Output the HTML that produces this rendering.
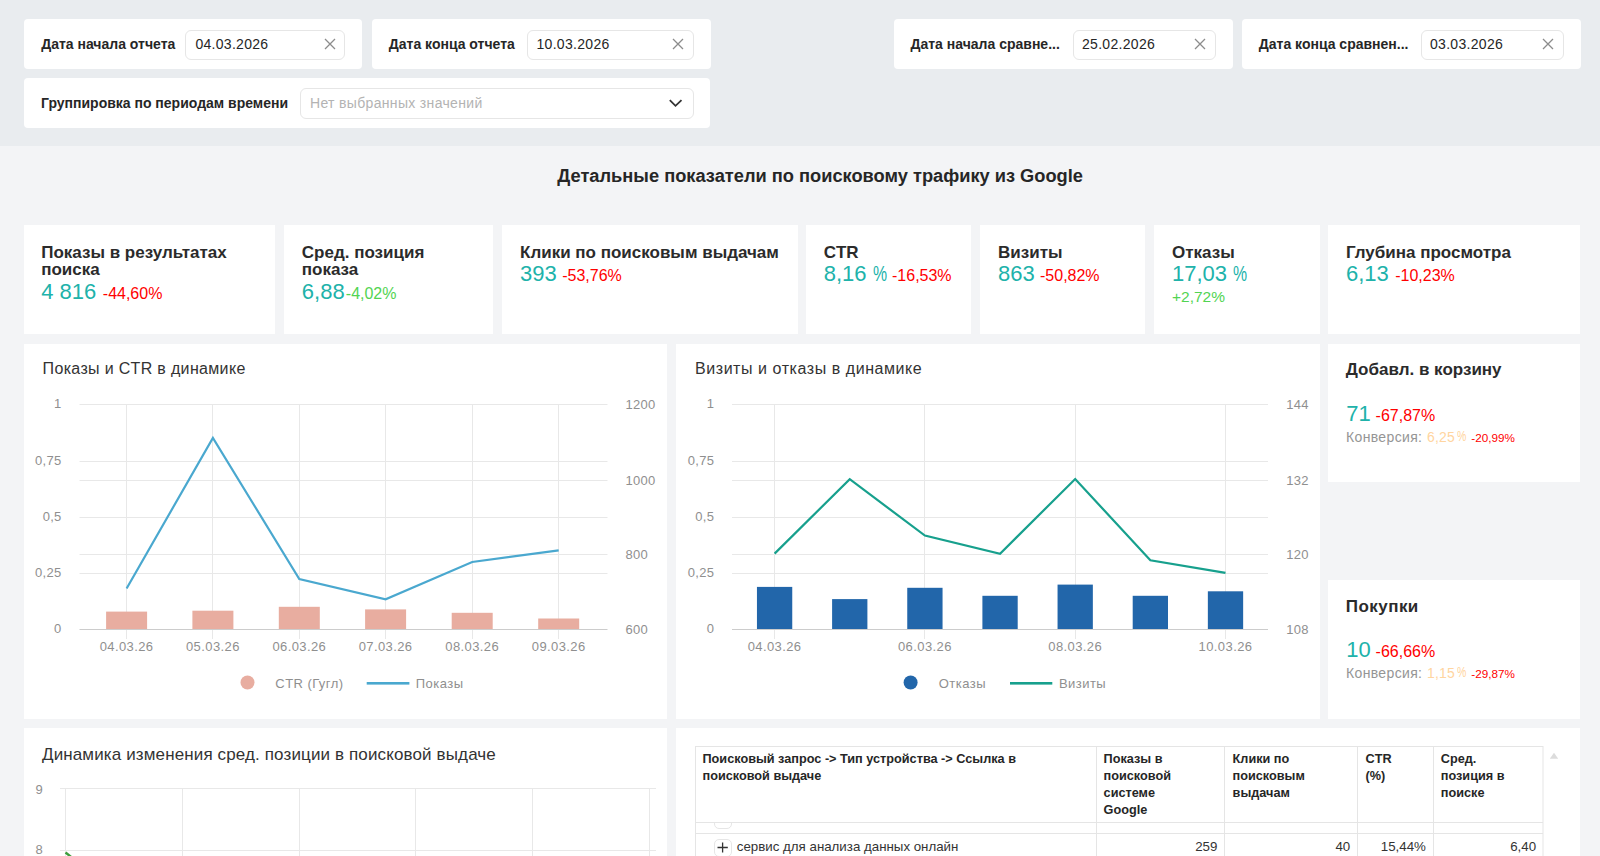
<!DOCTYPE html>
<html><head><meta charset="utf-8"><style>
html,body{margin:0;padding:0;}
body{width:1600px;height:856px;overflow:hidden;position:relative;background:#f3f4f6;font-family:"Liberation Sans", sans-serif;}
.t{position:absolute;white-space:nowrap;}
.b{position:absolute;}
</style></head><body>
<div class="b" style="left:0px;top:0px;width:1600px;height:146px;background:#e9ecef;"></div>
<div class="b" style="left:24px;top:19px;width:338px;height:50px;background:#fff;border-radius:4px;"></div>
<div class="t" style="left:41.20px;top:37.25px;font-size:14px;line-height:14px;color:#262626;font-weight:bold;">Дата начала отчета</div>
<div class="b" style="left:185.3px;top:29.5px;width:160.2px;height:30px;box-sizing:border-box;border:1px solid #e6e6e6;border-radius:6px;"></div>
<div class="t" style="left:195.40px;top:37.15px;font-size:14px;line-height:14px;color:#262626;letter-spacing:0.3px;">04.03.2026</div>
<svg class="b" style="left:324.0px;top:38.0px" width="12" height="12"><path d="M1 1L11 11M11 1L1 11" stroke="#8c8c8c" stroke-width="1.3" fill="none"/></svg>
<div class="b" style="left:372px;top:19px;width:338.5px;height:50px;background:#fff;border-radius:4px;"></div>
<div class="t" style="left:388.80px;top:37.25px;font-size:14px;line-height:14px;color:#262626;font-weight:bold;">Дата конца отчета</div>
<div class="b" style="left:526.5px;top:29.5px;width:167.0px;height:30px;box-sizing:border-box;border:1px solid #e6e6e6;border-radius:6px;"></div>
<div class="t" style="left:536.50px;top:37.15px;font-size:14px;line-height:14px;color:#262626;letter-spacing:0.3px;">10.03.2026</div>
<svg class="b" style="left:672.0px;top:38.0px" width="12" height="12"><path d="M1 1L11 11M11 1L1 11" stroke="#8c8c8c" stroke-width="1.3" fill="none"/></svg>
<div class="b" style="left:894px;top:19px;width:338.5px;height:50px;background:#fff;border-radius:4px;"></div>
<div class="t" style="left:910.50px;top:37.25px;font-size:14px;line-height:14px;color:#262626;font-weight:bold;">Дата начала сравне...</div>
<div class="b" style="left:1073px;top:29.5px;width:142.5px;height:30px;box-sizing:border-box;border:1px solid #e6e6e6;border-radius:6px;"></div>
<div class="t" style="left:1082.00px;top:37.15px;font-size:14px;line-height:14px;color:#262626;letter-spacing:0.3px;">25.02.2026</div>
<svg class="b" style="left:1194.0px;top:38.0px" width="12" height="12"><path d="M1 1L11 11M11 1L1 11" stroke="#8c8c8c" stroke-width="1.3" fill="none"/></svg>
<div class="b" style="left:1242px;top:19px;width:338.5px;height:50px;background:#fff;border-radius:4px;"></div>
<div class="t" style="left:1258.80px;top:37.25px;font-size:14px;line-height:14px;color:#262626;font-weight:bold;">Дата конца сравнен...</div>
<div class="b" style="left:1421px;top:29.5px;width:142.70000000000005px;height:30px;box-sizing:border-box;border:1px solid #e6e6e6;border-radius:6px;"></div>
<div class="t" style="left:1430.00px;top:37.15px;font-size:14px;line-height:14px;color:#262626;letter-spacing:0.3px;">03.03.2026</div>
<svg class="b" style="left:1542.0px;top:38.0px" width="12" height="12"><path d="M1 1L11 11M11 1L1 11" stroke="#8c8c8c" stroke-width="1.3" fill="none"/></svg>
<div class="b" style="left:24px;top:78px;width:686px;height:50px;background:#fff;border-radius:4px;"></div>
<div class="t" style="left:41.00px;top:96.25px;font-size:14px;line-height:14px;color:#262626;font-weight:bold;">Группировка по периодам времени</div>
<div class="b" style="left:299.5px;top:87.5px;width:394px;height:31px;box-sizing:border-box;border:1px solid #e6e6e6;border-radius:6px;"></div>
<div class="t" style="left:310.00px;top:96.15px;font-size:14px;line-height:14px;color:#b3b3b3;letter-spacing:0.33px;">Нет выбранных значений</div>
<svg class="b" style="left:668px;top:98px" width="16" height="10"><path d="M1.8 2.1L7.5 7.8L13.5 2.1" stroke="#333" stroke-width="1.8" fill="none"/></svg>
<div class="t" style="left:557.30px;top:166.85px;font-size:18.25px;line-height:18.25px;color:#262626;font-weight:bold;">Детальные показатели по поисковому трафику из Google</div>
<div class="b" style="left:24px;top:225px;width:251px;height:109px;background:#fff;"></div>
<div class="t" style="left:41.20px;top:243.51px;font-size:17px;line-height:17px;color:#2b2b2b;font-weight:bold;">Показы в результатах</div>
<div class="t" style="left:41.20px;top:261.01px;font-size:17px;line-height:17px;color:#2b2b2b;font-weight:bold;">поиска</div>
<div class="t" style="left:41.20px;top:280.98px;font-size:22px;line-height:22px;color:#20b2aa;">4 816</div>
<div class="t" style="left:102.80px;top:286.06px;font-size:16px;line-height:16px;color:#ff0000;">-44,60%</div>
<div class="b" style="left:284px;top:225px;width:208.5px;height:109px;background:#fff;"></div>
<div class="t" style="left:301.80px;top:243.51px;font-size:17px;line-height:17px;color:#2b2b2b;font-weight:bold;">Сред. позиция</div>
<div class="t" style="left:301.80px;top:261.01px;font-size:17px;line-height:17px;color:#2b2b2b;font-weight:bold;">показа</div>
<div class="t" style="left:301.80px;top:280.98px;font-size:22px;line-height:22px;color:#20b2aa;">6,88</div>
<div class="t" style="left:345.80px;top:286.06px;font-size:16px;line-height:16px;color:#52d452;">-4,02%</div>
<div class="b" style="left:502px;top:225px;width:296px;height:109px;background:#fff;"></div>
<div class="t" style="left:520.00px;top:243.51px;font-size:17px;line-height:17px;color:#2b2b2b;font-weight:bold;">Клики по поисковым выдачам</div>
<div class="t" style="left:520.00px;top:262.78px;font-size:22px;line-height:22px;color:#20b2aa;">393</div>
<div class="t" style="left:562.20px;top:267.86px;font-size:16px;line-height:16px;color:#ff0000;">-53,76%</div>
<div class="b" style="left:806px;top:225px;width:165px;height:109px;background:#fff;"></div>
<div class="t" style="left:823.70px;top:243.51px;font-size:17px;line-height:17px;color:#2b2b2b;font-weight:bold;">CTR</div>
<div class="t" style="left:823.70px;top:262.78px;font-size:22px;line-height:22px;color:#20b2aa;">8,16</div>
<div class="t" style="left:872.5px;top:262.78px;font-size:22px;line-height:22px;color:#20b2aa;transform:scaleX(0.72);transform-origin:0 0">%</div>
<div class="t" style="left:892.00px;top:267.86px;font-size:16px;line-height:16px;color:#ff0000;">-16,53%</div>
<div class="b" style="left:980px;top:225px;width:165px;height:109px;background:#fff;"></div>
<div class="t" style="left:998.00px;top:243.51px;font-size:17px;line-height:17px;color:#2b2b2b;font-weight:bold;">Визиты</div>
<div class="t" style="left:998.00px;top:262.78px;font-size:22px;line-height:22px;color:#20b2aa;">863</div>
<div class="t" style="left:1040.00px;top:267.86px;font-size:16px;line-height:16px;color:#ff0000;">-50,82%</div>
<div class="b" style="left:1154px;top:225px;width:166px;height:109px;background:#fff;"></div>
<div class="t" style="left:1172.00px;top:243.51px;font-size:17px;line-height:17px;color:#2b2b2b;font-weight:bold;">Отказы</div>
<div class="t" style="left:1172.00px;top:262.78px;font-size:22px;line-height:22px;color:#20b2aa;">17,03</div>
<div class="t" style="left:1232.5px;top:262.78px;font-size:22px;line-height:22px;color:#20b2aa;transform:scaleX(0.72);transform-origin:0 0">%</div>
<div class="t" style="left:1172.00px;top:288.88px;font-size:15.5px;line-height:15.5px;color:#52d452;">+2,72%</div>
<div class="b" style="left:1328px;top:225px;width:252px;height:109px;background:#fff;"></div>
<div class="t" style="left:1346.00px;top:243.51px;font-size:17px;line-height:17px;color:#2b2b2b;font-weight:bold;">Глубина просмотра</div>
<div class="t" style="left:1346.00px;top:262.78px;font-size:22px;line-height:22px;color:#20b2aa;">6,13</div>
<div class="t" style="left:1395.20px;top:267.86px;font-size:16px;line-height:16px;color:#ff0000;">-10,23%</div>
<div class="b" style="left:24px;top:344px;width:643px;height:375px;background:#fff;"></div>
<div class="b" style="left:676px;top:344px;width:644px;height:375px;background:#fff;"></div>
<div class="b" style="left:1328px;top:344px;width:252px;height:138px;background:#fff;"></div>
<div class="b" style="left:1328px;top:580px;width:252px;height:139px;background:#fff;"></div>
<div class="b" style="left:24px;top:728px;width:643px;height:128px;background:#fff;"></div>
<div class="b" style="left:676px;top:728px;width:904px;height:128px;background:#fff;"></div>
<div class="t" style="left:42.60px;top:360.86px;font-size:16px;line-height:16px;color:#333;letter-spacing:0.33px;">Показы и CTR в динамике</div>
<div class="t" style="right:1538.40px;top:397.00px;font-size:13px;line-height:13px;color:#8f8f8f;letter-spacing:0.3px;">1</div>
<div class="t" style="right:1538.40px;top:454.00px;font-size:13px;line-height:13px;color:#8f8f8f;letter-spacing:0.3px;">0,75</div>
<div class="t" style="right:1538.40px;top:510.00px;font-size:13px;line-height:13px;color:#8f8f8f;letter-spacing:0.3px;">0,5</div>
<div class="t" style="right:1538.40px;top:566.00px;font-size:13px;line-height:13px;color:#8f8f8f;letter-spacing:0.3px;">0,25</div>
<div class="t" style="right:1538.40px;top:622.00px;font-size:13px;line-height:13px;color:#8f8f8f;letter-spacing:0.3px;">0</div>
<div class="t" style="left:625.50px;top:397.50px;font-size:13px;line-height:13px;color:#8f8f8f;letter-spacing:0.3px;">1200</div>
<div class="t" style="left:625.50px;top:473.50px;font-size:13px;line-height:13px;color:#8f8f8f;letter-spacing:0.3px;">1000</div>
<div class="t" style="left:625.50px;top:547.50px;font-size:13px;line-height:13px;color:#8f8f8f;letter-spacing:0.3px;">800</div>
<div class="t" style="left:625.50px;top:622.50px;font-size:13px;line-height:13px;color:#8f8f8f;letter-spacing:0.3px;">600</div>
<div class="t" style="left:126.60px;transform:translateX(-50%);top:639.60px;font-size:13px;line-height:13px;color:#8f8f8f;letter-spacing:0.4px;">04.03.26</div>
<div class="t" style="left:212.90px;transform:translateX(-50%);top:639.60px;font-size:13px;line-height:13px;color:#8f8f8f;letter-spacing:0.4px;">05.03.26</div>
<div class="t" style="left:299.30px;transform:translateX(-50%);top:639.60px;font-size:13px;line-height:13px;color:#8f8f8f;letter-spacing:0.4px;">06.03.26</div>
<div class="t" style="left:385.60px;transform:translateX(-50%);top:639.60px;font-size:13px;line-height:13px;color:#8f8f8f;letter-spacing:0.4px;">07.03.26</div>
<div class="t" style="left:472.20px;transform:translateX(-50%);top:639.60px;font-size:13px;line-height:13px;color:#8f8f8f;letter-spacing:0.4px;">08.03.26</div>
<div class="t" style="left:558.70px;transform:translateX(-50%);top:639.60px;font-size:13px;line-height:13px;color:#8f8f8f;letter-spacing:0.4px;">09.03.26</div>
<div class="t" style="left:275.30px;top:677.30px;font-size:13px;line-height:13px;color:#8f8f8f;letter-spacing:0.45px;">CTR (Гугл)</div>
<div class="t" style="left:415.80px;top:677.30px;font-size:13px;line-height:13px;color:#8f8f8f;letter-spacing:0.45px;">Показы</div>
<div class="t" style="left:695.00px;top:360.86px;font-size:16px;line-height:16px;color:#333;letter-spacing:0.56px;">Визиты и отказы в динамике</div>
<div class="t" style="right:885.70px;top:397.00px;font-size:13px;line-height:13px;color:#8f8f8f;letter-spacing:0.3px;">1</div>
<div class="t" style="right:885.70px;top:454.00px;font-size:13px;line-height:13px;color:#8f8f8f;letter-spacing:0.3px;">0,75</div>
<div class="t" style="right:885.70px;top:510.00px;font-size:13px;line-height:13px;color:#8f8f8f;letter-spacing:0.3px;">0,5</div>
<div class="t" style="right:885.70px;top:566.00px;font-size:13px;line-height:13px;color:#8f8f8f;letter-spacing:0.3px;">0,25</div>
<div class="t" style="right:885.70px;top:622.00px;font-size:13px;line-height:13px;color:#8f8f8f;letter-spacing:0.3px;">0</div>
<div class="t" style="left:1286.30px;top:397.50px;font-size:13px;line-height:13px;color:#8f8f8f;letter-spacing:0.3px;">144</div>
<div class="t" style="left:1286.30px;top:473.50px;font-size:13px;line-height:13px;color:#8f8f8f;letter-spacing:0.3px;">132</div>
<div class="t" style="left:1286.30px;top:547.50px;font-size:13px;line-height:13px;color:#8f8f8f;letter-spacing:0.3px;">120</div>
<div class="t" style="left:1286.30px;top:622.50px;font-size:13px;line-height:13px;color:#8f8f8f;letter-spacing:0.3px;">108</div>
<div class="t" style="left:774.60px;transform:translateX(-50%);top:639.60px;font-size:13px;line-height:13px;color:#8f8f8f;letter-spacing:0.4px;">04.03.26</div>
<div class="t" style="left:924.90px;transform:translateX(-50%);top:639.60px;font-size:13px;line-height:13px;color:#8f8f8f;letter-spacing:0.4px;">06.03.26</div>
<div class="t" style="left:1075.20px;transform:translateX(-50%);top:639.60px;font-size:13px;line-height:13px;color:#8f8f8f;letter-spacing:0.4px;">08.03.26</div>
<div class="t" style="left:1225.50px;transform:translateX(-50%);top:639.60px;font-size:13px;line-height:13px;color:#8f8f8f;letter-spacing:0.4px;">10.03.26</div>
<div class="t" style="left:938.80px;top:677.30px;font-size:13px;line-height:13px;color:#8f8f8f;letter-spacing:0.45px;">Отказы</div>
<div class="t" style="left:1059.00px;top:677.30px;font-size:13px;line-height:13px;color:#8f8f8f;letter-spacing:0.45px;">Визиты</div>
<div class="t" style="left:1345.80px;top:361.21px;font-size:17px;line-height:17px;color:#2b2b2b;font-weight:bold;">Добавл. в корзину</div>
<div class="t" style="left:1346.20px;top:402.98px;font-size:22px;line-height:22px;color:#20b2aa;">71</div>
<div class="t" style="left:1375.60px;top:408.06px;font-size:16px;line-height:16px;color:#ff0000;">-67,87%</div>
<div class="t" style="left:1346.00px;top:429.55px;font-size:14px;line-height:14px;color:#959595;letter-spacing:0.35px;">Конверсия:</div>
<div class="t" style="left:1427.00px;top:429.55px;font-size:14px;line-height:14px;color:#ffd5a0;letter-spacing:0.2px;">6,25</div>
<div class="t" style="left:1456.5px;top:429.05px;font-size:14px;line-height:14px;color:#ffd5a0;transform:scaleX(0.75);transform-origin:0 0">%</div>
<div class="t" style="left:1471.30px;top:431.50px;font-size:11.7px;line-height:11.7px;color:#ff0000;">-20,99%</div>
<div class="t" style="left:1345.80px;top:597.51px;font-size:17px;line-height:17px;color:#2b2b2b;font-weight:bold;letter-spacing:0.45px;">Покупки</div>
<div class="t" style="left:1346.20px;top:639.28px;font-size:22px;line-height:22px;color:#20b2aa;">10</div>
<div class="t" style="left:1375.60px;top:644.36px;font-size:16px;line-height:16px;color:#ff0000;">-66,66%</div>
<div class="t" style="left:1346.00px;top:665.85px;font-size:14px;line-height:14px;color:#959595;letter-spacing:0.35px;">Конверсия:</div>
<div class="t" style="left:1427.00px;top:665.85px;font-size:14px;line-height:14px;color:#ffd5a0;letter-spacing:0.2px;">1,15</div>
<div class="t" style="left:1456.5px;top:665.35px;font-size:14px;line-height:14px;color:#ffd5a0;transform:scaleX(0.75);transform-origin:0 0">%</div>
<div class="t" style="left:1471.30px;top:667.80px;font-size:11.7px;line-height:11.7px;color:#ff0000;">-29,87%</div>
<div class="t" style="left:42.00px;top:745.61px;font-size:17px;line-height:17px;color:#333;letter-spacing:0.13px;">Динамика изменения сред. позиции в поисковой выдаче</div>
<div class="t" style="right:1557.40px;top:782.50px;font-size:13px;line-height:13px;color:#8f8f8f;">9</div>
<div class="t" style="right:1557.40px;top:843.00px;font-size:13px;line-height:13px;color:#8f8f8f;">8</div>
<div class="t" style="left:702.50px;top:752.75px;font-size:12.7px;line-height:12.7px;color:#262626;font-weight:bold;">Поисковый запрос -&gt; Тип устройства -&gt; Ссылка в</div>
<div class="t" style="left:702.50px;top:769.80px;font-size:12.7px;line-height:12.7px;color:#262626;font-weight:bold;">поисковой выдаче</div>
<div class="t" style="left:1103.60px;top:752.75px;font-size:12.7px;line-height:12.7px;color:#262626;font-weight:bold;">Показы в</div>
<div class="t" style="left:1103.60px;top:769.80px;font-size:12.7px;line-height:12.7px;color:#262626;font-weight:bold;">поисковой</div>
<div class="t" style="left:1103.60px;top:786.85px;font-size:12.7px;line-height:12.7px;color:#262626;font-weight:bold;">системе</div>
<div class="t" style="left:1103.60px;top:803.90px;font-size:12.7px;line-height:12.7px;color:#262626;font-weight:bold;">Google</div>
<div class="t" style="left:1232.60px;top:752.75px;font-size:12.7px;line-height:12.7px;color:#262626;font-weight:bold;">Клики по</div>
<div class="t" style="left:1232.60px;top:769.80px;font-size:12.7px;line-height:12.7px;color:#262626;font-weight:bold;">поисковым</div>
<div class="t" style="left:1232.60px;top:786.85px;font-size:12.7px;line-height:12.7px;color:#262626;font-weight:bold;">выдачам</div>
<div class="t" style="left:1365.50px;top:752.75px;font-size:12.7px;line-height:12.7px;color:#262626;font-weight:bold;">CTR</div>
<div class="t" style="left:1365.50px;top:769.80px;font-size:12.7px;line-height:12.7px;color:#262626;font-weight:bold;">(%)</div>
<div class="t" style="left:1440.80px;top:752.75px;font-size:12.7px;line-height:12.7px;color:#262626;font-weight:bold;">Сред.</div>
<div class="t" style="left:1440.80px;top:769.80px;font-size:12.7px;line-height:12.7px;color:#262626;font-weight:bold;">позиция в</div>
<div class="t" style="left:1440.80px;top:786.85px;font-size:12.7px;line-height:12.7px;color:#262626;font-weight:bold;">поиске</div>
<div class="b" style="left:713.5px;top:838.5px;width:18px;height:18px;box-sizing:border-box;border:1px solid #e6e6e6;border-radius:5px;"></div>
<div class="b" style="left:696px;top:823px;width:846px;height:10px;overflow:hidden;"><div class="b" style="left:17.5px;top:-12px;width:18px;height:17.5px;box-sizing:border-box;border:1px solid #e6e6e6;border-radius:5px;"></div></div>
<div class="t" style="left:736.80px;top:840.04px;font-size:13.3px;line-height:13.3px;color:#333;">сервис для анализа данных онлайн</div>
<div class="t" style="right:382.60px;top:840.04px;font-size:13.3px;line-height:13.3px;color:#333;">259</div>
<div class="t" style="right:249.80px;top:840.04px;font-size:13.3px;line-height:13.3px;color:#333;">40</div>
<div class="t" style="right:174.10px;top:840.04px;font-size:13.3px;line-height:13.3px;color:#333;">15,44%</div>
<div class="t" style="right:63.90px;top:840.04px;font-size:13.3px;line-height:13.3px;color:#333;">6,40</div>
<svg class="b" style="left:0;top:0" width="1600" height="856"><rect x="79.5" y="404" width="528.0" height="1" fill="#e8e8e8"/><rect x="79.5" y="461" width="528.0" height="1" fill="#e8e8e8"/><rect x="79.5" y="517" width="528.0" height="1" fill="#e8e8e8"/><rect x="79.5" y="573" width="528.0" height="1" fill="#e8e8e8"/><rect x="79.5" y="480" width="528.0" height="1" fill="#e8e8e8"/><rect x="79.5" y="554" width="528.0" height="1" fill="#e8e8e8"/><rect x="126" y="404" width="1" height="235" fill="#e8e8e8"/><rect x="212" y="404" width="1" height="235" fill="#e8e8e8"/><rect x="299" y="404" width="1" height="235" fill="#e8e8e8"/><rect x="385" y="404" width="1" height="235" fill="#e8e8e8"/><rect x="472" y="404" width="1" height="235" fill="#e8e8e8"/><rect x="558" y="404" width="1" height="235" fill="#e8e8e8"/><rect x="79.5" y="629" width="528.0" height="1" fill="#cccccc"/><rect x="106.10" y="611.6" width="41" height="17.40" fill="#e8ada0"/><rect x="192.40" y="610.7" width="41" height="18.30" fill="#e8ada0"/><rect x="278.80" y="606.8" width="41" height="22.20" fill="#e8ada0"/><rect x="365.10" y="609.4" width="41" height="19.60" fill="#e8ada0"/><rect x="451.70" y="612.8" width="41" height="16.20" fill="#e8ada0"/><rect x="538.20" y="618.5" width="41" height="10.50" fill="#e8ada0"/><path d="M126.6,588.5 L212.9,437.9 L299.3,579.0 L385.6,599.3 L472.2,562.0 L558.7,550.3" stroke="#4aa8cf" stroke-width="2.2" fill="none" stroke-linejoin="miter"/><circle cx="247.5" cy="682.5" r="7" fill="#e8ada0"/><rect x="366.7" y="682" width="42.69999999999999" height="2.6" fill="#4aa8cf"/><rect x="732" y="404" width="536" height="1" fill="#e8e8e8"/><rect x="732" y="461" width="536" height="1" fill="#e8e8e8"/><rect x="732" y="517" width="536" height="1" fill="#e8e8e8"/><rect x="732" y="573" width="536" height="1" fill="#e8e8e8"/><rect x="732" y="480" width="536" height="1" fill="#e8e8e8"/><rect x="732" y="554" width="536" height="1" fill="#e8e8e8"/><rect x="774" y="404" width="1" height="235" fill="#e8e8e8"/><rect x="924" y="404" width="1" height="235" fill="#e8e8e8"/><rect x="1075" y="404" width="1" height="235" fill="#e8e8e8"/><rect x="1225" y="404" width="1" height="235" fill="#e8e8e8"/><rect x="732" y="629" width="536" height="1" fill="#cccccc"/><rect x="756.95" y="586.9" width="35.3" height="42.10" fill="#2266aa"/><rect x="832.10" y="599.1" width="35.3" height="29.90" fill="#2266aa"/><rect x="907.25" y="587.8" width="35.3" height="41.20" fill="#2266aa"/><rect x="982.40" y="595.8" width="35.3" height="33.20" fill="#2266aa"/><rect x="1057.55" y="584.6" width="35.3" height="44.40" fill="#2266aa"/><rect x="1132.70" y="595.8" width="35.3" height="33.20" fill="#2266aa"/><rect x="1207.85" y="591.3" width="35.3" height="37.70" fill="#2266aa"/><path d="M774.6,553.6 L849.75,479.2 L924.9000000000001,535.6 L1000.0500000000001,553.7 L1075.2,479.0 L1150.35,560.25 L1225.5,572.85" stroke="#17a08d" stroke-width="2.2" fill="none" stroke-linejoin="miter"/><circle cx="910.6" cy="682.5" r="7" fill="#2266aa"/><rect x="1010" y="682" width="42.299999999999955" height="2.6" fill="#17a08d"/><rect x="60" y="788" width="596" height="1" fill="#e8e8e8"/><rect x="60" y="850" width="596" height="1" fill="#e8e8e8"/><rect x="65" y="788" width="1" height="68" fill="#e8e8e8"/><rect x="182" y="788" width="1" height="68" fill="#e8e8e8"/><rect x="299" y="788" width="1" height="68" fill="#e8e8e8"/><rect x="415" y="788" width="1" height="68" fill="#e8e8e8"/><rect x="532" y="788" width="1" height="68" fill="#e8e8e8"/><rect x="649" y="788" width="1" height="68" fill="#e8e8e8"/><path d="M65.5,852.5 L80,864" stroke="#3d9e3d" stroke-width="2.4" fill="none"/><rect x="695.5" y="746.5" width="847.5" height="120" fill="none" stroke="#e5e5e5" stroke-width="1"/><rect x="1096" y="746" width="1" height="110" fill="#e5e5e5"/><rect x="1224" y="746" width="1" height="110" fill="#e5e5e5"/><rect x="1357" y="746" width="1" height="110" fill="#e5e5e5"/><rect x="1433" y="746" width="1" height="110" fill="#e5e5e5"/><rect x="695" y="822" width="848" height="1" fill="#e5e5e5"/><rect x="695" y="833" width="848" height="1" fill="#e5e5e5"/><path d="M717.5,847.5 H727.8 M722.6,842.5 V852.5" stroke="#333" stroke-width="1.3" fill="none"/><path d="M1549.8,758.8 L1554,752.8 L1558.2,758.8 Z" fill="#dcdcdc"/></svg>
</body></html>
